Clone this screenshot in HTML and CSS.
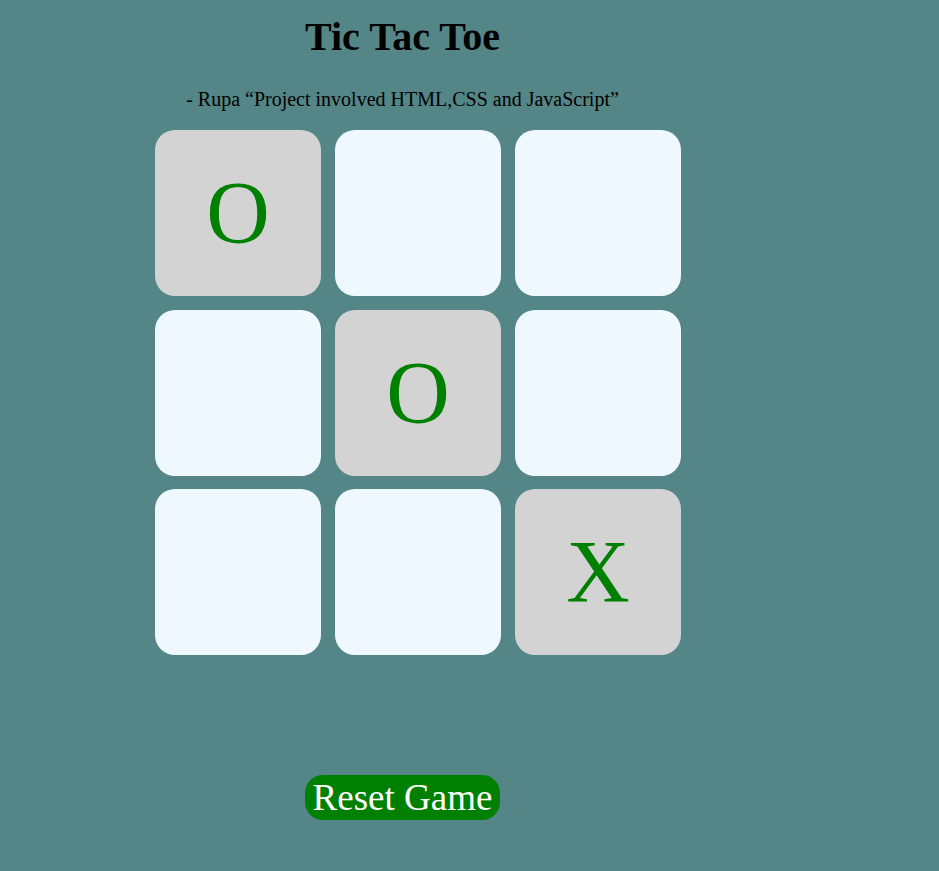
FILE: index.html
```html
<!DOCTYPE html>
<html lang="en">
<head>
<meta charset="utf-8">
<title>Tic Tac Toe</title>
<link rel="stylesheet" href="styles.css">
</head>
<body>
  <main class="page">
    <h1 class="title">Tic Tac Toe</h1>
    <p class="byline">- Rupa “Project involved HTML,CSS and JavaScript”</p>
    <div class="board">
      <button class="box played">O</button>
      <button class="box"></button>
      <button class="box"></button>
      <button class="box"></button>
      <button class="box played">O</button>
      <button class="box"></button>
      <button class="box"></button>
      <button class="box"></button>
      <button class="box played">X</button>
    </div>
    <div class="actions">
      <button class="reset">Reset Game</button>
    </div>
  </main>
</body>
</html>
```
FILE: styles.css
```css
html, body {
  margin: 0;
  padding: 0;
}
body {
  background: #548687;
  font-family: "Liberation Serif", "Times New Roman", serif;
  color: #000;
  min-height: 100vh;
}
.page {
  width: 789px;
  margin-left: 8px;
  display: flex;
  flex-direction: column;
  align-items: center;
}
.title {
  margin: 12px 0 0;
  font-size: 40px;
  font-weight: bold;
  line-height: 50px;
}
.byline {
  margin: 24px 0 0;
  font-size: 20px;
  line-height: 26px;
}
.board {
  align-self: flex-start;
  margin: 18px 0 0 147px;
  display: grid;
  grid-template-columns: repeat(3, 166px);
  grid-template-rows: repeat(3, 166px);
  column-gap: 14px;
  row-gap: 13.5px;
}
.box {
  border: none;
  border-radius: 20px;
  background: #f0f8ff;
  color: green;
  font-family: "Liberation Serif", "Times New Roman", serif;
  font-size: 88px;
  padding: 0;
  display: flex;
  align-items: center;
  justify-content: center;
  line-height: 1;
}
.box.played {
  background: #d3d3d3;
}
.actions {
  margin-top: 120px;
}
.reset {
  border: none;
  background: green;
  color: #fff;
  font-family: "Liberation Serif", "Times New Roman", serif;
  font-size: 37px;
  line-height: 45px;
  height: 45px;
  padding: 0 7.5px;
  border-radius: 18px;
}
```
